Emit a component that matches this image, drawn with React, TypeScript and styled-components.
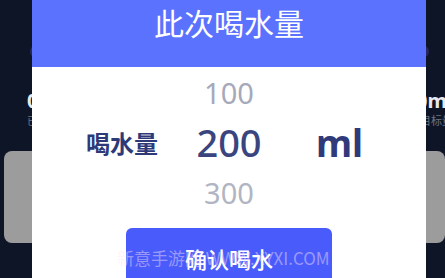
import React from "react";
import styled, { createGlobalStyle } from "styled-components";

const GlobalStyle = createGlobalStyle`
  html, body {
    margin: 0;
    padding: 0;
    background: #0e1526;
  }
  * {
    box-sizing: border-box;
  }
`;

const Page = styled.div`
  position: relative;
  width: 445px;
  height: 278px;
  overflow: hidden;
  background: #0e1526;
  font-family: "Noto Sans", "Noto Sans CJK SC", sans-serif;
  padding-top: 45px;
`;

const ProgressTrack = styled.div`
  height: 13px;
  margin: 0 16px 0 30px;
  border-radius: 7px;
  background: #2a2660;
`;

const StatsRow = styled.div`
  display: flex;
  justify-content: space-between;
  margin-top: 32px;
  padding: 0 0 0 27px;
`;

const Stat = styled.div<{ $align: "left" | "right" }>`
  display: flex;
  flex-direction: column;
  align-items: ${(p) => (p.$align === "left" ? "flex-start" : "flex-end")};
  gap: 2px;
  ${(p) => (p.$align === "right" ? "margin-right: -8px;" : "")}
`;

const StatValue = styled.div`
  color: #e8e9ee;
  font-size: 20px;
  font-weight: 700;
  line-height: 22px;
`;

const StatLabel = styled.div`
  color: #6e7382;
  font-size: 11px;
  line-height: 14px;
`;

const Card = styled.div`
  height: 92px;
  margin: 23px 0 0 4px;
  border-radius: 8px;
  background: #9c9c9c;
`;

const Modal = styled.div`
  position: absolute;
  top: 0;
  left: 32px;
  width: 394px;
  height: 300px;
  background: #ffffff;
  display: flex;
  flex-direction: column;
  align-items: center;
`;

const Header = styled.div`
  width: 100%;
  height: 67px;
  background: #5a72fe;
  display: flex;
  justify-content: center;
  padding-top: 3px;
`;

const Title = styled.h1`
  margin: 0;
  color: #ffffff;
  font-family: "Noto Sans CJK SC", sans-serif;
  font-size: 30px;
  font-weight: 400;
  line-height: 38px;
`;

const Picker = styled.div`
  width: 100%;
  display: flex;
  flex-direction: column;
`;

const PickerRow = styled.div`
  height: 50px;
  display: grid;
  grid-template-columns: 1fr 120px 1fr;
  align-items: center;
`;

const RowLabel = styled.div`
  justify-self: end;
  padding-right: 11px;
  color: #2e3a78;
  font-family: "Noto Sans CJK SC", sans-serif;
  font-size: 24px;
  font-weight: 700;
`;

const Value = styled.div<{ $active?: boolean; $tone?: string }>`
  text-align: center;
  font-size: ${(p) => (p.$active ? "38px" : "29px")};
  font-weight: ${(p) => (p.$active ? 500 : 400)};
  color: ${(p) => p.$tone};
  line-height: 1;
`;

const Unit = styled.div`
  padding-left: 27px;
  color: #2f3a7a;
  font-size: 37px;
  font-weight: 700;
  line-height: 1;
`;

const ConfirmButton = styled.button`
  margin-top: 11px;
  width: 206px;
  height: 60px;
  border: none;
  border-radius: 6px;
  background: #4a5bfc;
  color: #ffffff;
  font-family: "Noto Sans CJK SC", sans-serif;
  font-size: 22px;
  font-weight: 500;
  padding: 0;
  cursor: pointer;
`;

const Watermark = styled.div`
  position: absolute;
  left: 117px;
  top: 245px;
  color: rgba(255, 230, 245, 0.45);
  font-family: "Noto Sans CJK SC", sans-serif;
  font-size: 17px;
  white-space: nowrap;
  pointer-events: none;
`;

const App: React.FC = () => {
  return (
    <>
      <GlobalStyle />
      <Page>
        <ProgressTrack />
        <StatsRow>
          <Stat $align="left">
            <StatValue>0ml</StatValue>
            <StatLabel>已喝水量</StatLabel>
          </Stat>
          <Stat $align="right">
            <StatValue>2000ml</StatValue>
            <StatLabel>目标量</StatLabel>
          </Stat>
        </StatsRow>
        <Card />

        <Modal>
          <Header>
            <Title>此次喝水量</Title>
          </Header>
          <Picker>
            <PickerRow>
              <span />
              <Value $tone="#a5a9ba">100</Value>
              <span />
            </PickerRow>
            <PickerRow>
              <RowLabel>喝水量</RowLabel>
              <Value $active $tone="#3a4580">200</Value>
              <Unit>ml</Unit>
            </PickerRow>
            <PickerRow>
              <span />
              <Value $tone="#b1b4c3">300</Value>
              <span />
            </PickerRow>
          </Picker>
          <ConfirmButton>确认喝水</ConfirmButton>
        </Modal>
        <Watermark>新意手游网 WWW.XYXI.COM</Watermark>
      </Page>
    </>
  );
};

export default App;
